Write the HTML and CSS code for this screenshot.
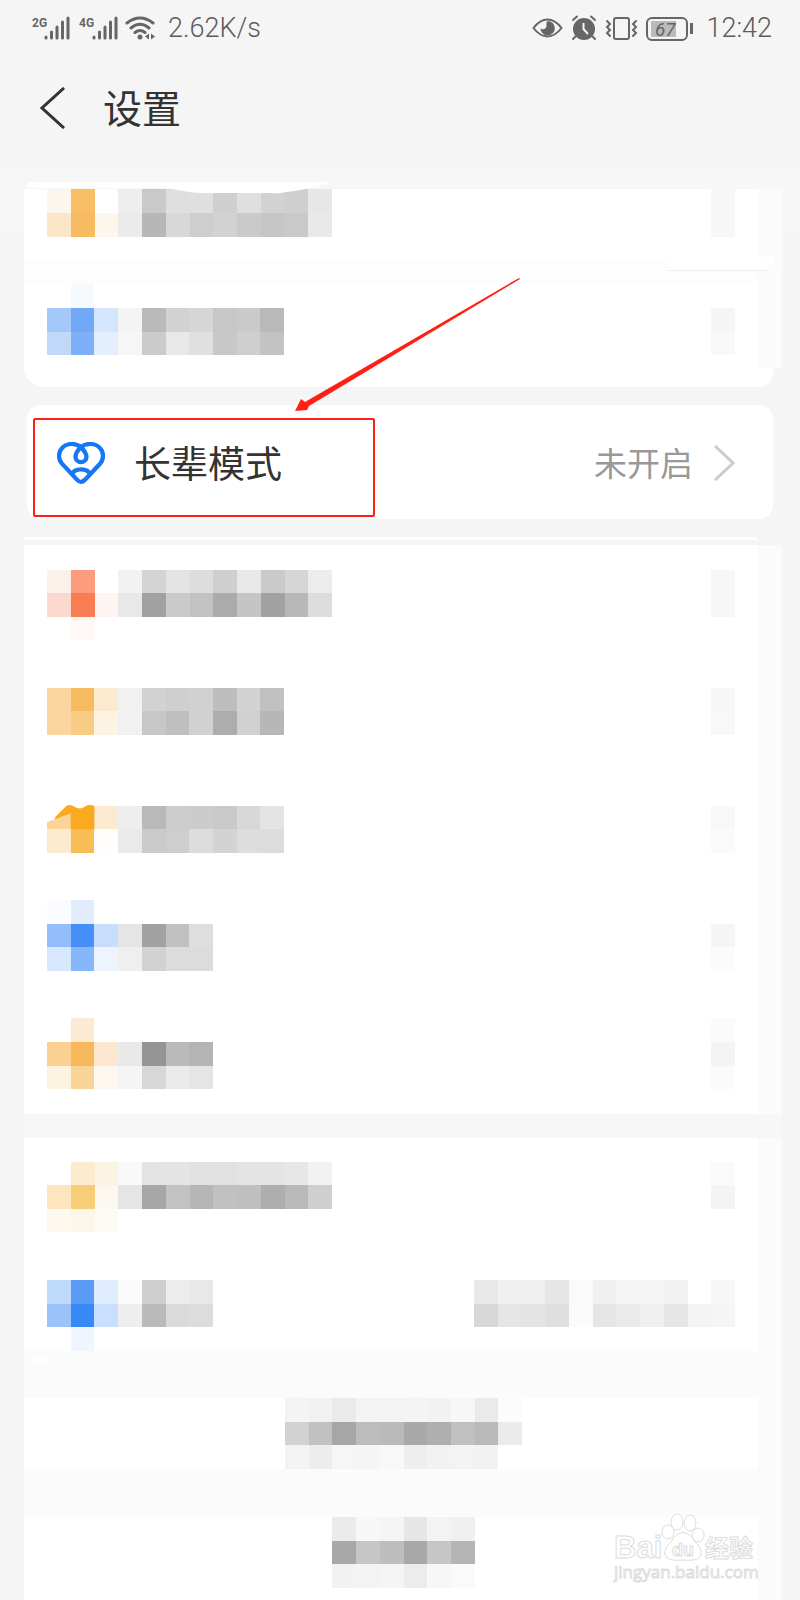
FILE: index.html
```html
<!DOCTYPE html>
<html lang="zh-CN">
<head>
<meta charset="utf-8">
<meta name="viewport" content="width=device-width, initial-scale=1">
<title>设置</title>
<link rel="stylesheet" href="styles.css">
</head>
<body>
<div class="status">
  <div class="status-group">
    <svg class="signals" viewBox="0 0 124 26" aria-hidden="true">
      <g class="net-label"><text x="0" y="12">2G</text><text x="47" y="12">4G</text></g>
      <g class="bars">
        <path d="M14 22v1M19.500 17v6M25 12v11M30.500 7v16M36 3v20"/>
        <path d="M62 22v1M67.500 17v6M73 12v11M78.500 7v16M84 3v20"/>
      </g>
      <g class="wifi">
        <path d="M95 8Q108 -2 121 8M99 13Q108 5.500 117 13M103 17.500Q108 13.500 113 17.500"/>
      </g>
      <circle cx="108" cy="22" r="2.500"/>
      <path d="M113 21.500l4-3v6zM123 21.500l-4-3v6z"/>
    </svg>
    <span>2.62K/s</span>
  </div>
  <div class="status-group">
    <svg class="indicators" viewBox="0 0 162 26" aria-hidden="true">
      <path class="line" d="M1.500 13Q8 4.500 15.500 4.500T29.500 13Q23 21.500 15.500 21.500T1.500 13z"/>
      <path d="M15.500 6a7.200 7.200 0 1 1-7 7c2 2.500 6 1 6-2c0-1.500-.5-3.500 1-5z"/>
      <circle cx="52" cy="14" r="11"/>
      <path class="line" d="M41 5l4-3.500M63 5l-4-3.500M44 21l-3 3M60 21l3 3"/>
      <path class="hand" d="M51.500 8v6l4.500 5"/>
      <rect class="line" x="82" y="3" width="15" height="21" rx="2"/>
      <path class="wave" d="M75 6l3 3l-3 3l3 3l-3 3l3 3M104 6l-3 3l3 3l-3 3l3 3l-3 3"/>
      <rect class="line" x="115" y="3" width="40" height="22" rx="5"/>
      <rect class="charge" x="119" y="6" width="25" height="16" rx="1"/>
      <text class="percent" x="123" y="21">67</text>
      <path d="M158 8h3v11h-3z"/>
    </svg>
    <span>12:42</span>
  </div>
</div>

<header class="topbar">
  <button class="back" type="button" aria-label="返回">
    <svg viewBox="0 0 26 42" aria-hidden="true"><path d="M24 1L2 21L24 41"/></svg>
  </button>
  <h1>设置</h1>
</header>

<main class="page">
  <ul class="card card-first">
    <li class="row divided">
      <svg class="tiles" data-rows="fdf6ef f9bf64 . eeeeee c9c9c9 dedede dfdfdf cfcfcf dfdfdf d2d2d2 cfcfcf e7e7e7/fce6c8 f7bb61 fdf7eb ebebeb b7b7b7 d8d8d8 cecece d2d2d2 cacaca c6c6c6 c9c9c9 e9e9e9/./."></svg>
      <svg class="tiles" data-rows="f7f7f7/f7f7f7/./."></svg>
    </li>
    <li class="row">
      <svg class="tiles" data-rows=". f5fafe . . . . . . . ./a4c8f9 72a9f7 d3e6fc f4f4f4 bababa d2d2d2 d6d6d6 c7c7c7 cacaca b9b9b9/c1d9f9 7eb0f9 e4effd f6f6f6 cbcbcb e8e8e8 e0e0e0 c8c8c8 cfcfcf c3c3c3/."></svg>
      <svg class="tiles" data-rows="./f5f5f5/f9f9f9/."></svg>
    </li>
    <li class="smear" aria-hidden="true">
      <svg viewBox="0 0 758 100">
        <path class="white" d="M2 4Q2 0 8 0H306C296 4 280 8 262 10Q254 12 246 11H180C162 11 160 8 140 6H4z"/>
        <path class="white" d="M644 77Q720 77 749 74V82L740 88H644z"/>
        <path class="hair" d="M644 88.500H742"/>
      </svg>
    </li>
  </ul>

  <section class="elder">
    <button class="elder-row" type="button">
      <svg class="heart" viewBox="0 0 145 129" aria-hidden="true">
        <path d="M72 15C57 2 30 2 16 17C3 30 3 52 15 65L61 114Q72 126 84 114L130 65C142 52 142 30 129 17C115 2 88 2 72 15z"/>
        <path d="M72 15C62 25 56 33 56 44A16.500 16.500 0 0 0 89 44C89 33 82 25 72 15z"/>
        <path d="M45 97C53 77 92 77 100 97"/>
      </svg>
      <span class="elder-name">长辈模式</span>
      <span class="elder-state">未开启</span>
      <svg class="chevron" viewBox="0 0 22 36" aria-hidden="true"><path d="M2 1L20 18L2 35"/></svg>
    </button>
    <div class="highlight"></div>
    <svg class="arrow" viewBox="0 0 226 136" aria-hidden="true"><path d="M0 134L6 122L10 125L224 1L225 2L14 129L12 133z"/></svg>
  </section>

  <ul class="card card-long">
    <li class="row">
      <svg class="tiles" data-rows="./fcf0ea fa9c7d . f2f2f2 d4d4d4 e4e4e4 dddddd cfcfcf e8e8e8 cacaca d5d5d5 ececec/fbd9cf f97d53 fef4f1 e8e8e8 a1a1a1 cacaca c2c2c2 ababab c5c5c5 a2a2a2 b8b8b8 dddddd/. fff8f6/."></svg>
      <svg class="tiles" data-rows="./f7f7f7/f7f7f7/./."></svg>
    </li>
    <li class="row">
      <svg class="tiles" data-rows="./fad59f f8ba5e fcead0 f1f1f1 d2d2d2 cfcfcf d1d1d1 bebebe d3d3d3 c1c1c1/fad59f f8cc85 fdf3e3 f1f1f1 c7c7c7 bfbfbf d1d1d1 adadad d1d1d1 b7b7b7/./."></svg>
      <svg class="tiles" data-rows="./f7f7f7/f8f8f8/./."></svg>
    </li>
    <li class="row">
      <svg class="tiles" data-rows="./fbd596 . fcead0 eeeeee b9b9b9 cdcdcd cccccc c9c9c9 d8d8d8 e4e4e4/fcebcf f9bd56 fffefb eaeaea cbcbcb cecece dcdcdc d3d3d3 dddddd dcdcdc/./."><path fill="#fff" d="M0 1H1V1.340L0 1.700z"/><path class="blob" d="M.32 1.590L.36 1.470L.8 1.030Q.95 .93 1.100 1.020Q1.380 1.220 1.600 1.040Q1.800 .93 2 1.020V2H1V1.340z"/></svg>
      <svg class="tiles" data-rows="./f8f8f8/fafafa/./."></svg>
    </li>
    <li class="row">
      <svg class="tiles" data-rows="fafcff e1edfc . . . . ./93bdfb 468ff8 c7ddfa e5e5e5 a2a2a2 c1c1c1 dedede/d7e7fd 86b6fa edf4fd efefef d2d2d2 dcdcdc dcdcdc/./."></svg>
      <svg class="tiles" data-rows="./f5f5f5/fbfbfb/./."></svg>
    </li>
    <li class="row">
      <svg class="tiles" data-rows=". fcead4 . . . . ./fad193 f7b75b fbe7ce e9e9e9 959595 bababa b4b4b4/fcf3e1 fad399 fdf8ef f5f5f5 d7d7d7 ebebeb e5e5e5/."></svg>
      <svg class="tiles" data-rows="fbfbfb/f4f4f4/fbfbfb/."></svg>
    </li>
  </ul>

  <ul class="card card-short">
    <li class="row">
      <svg class="tiles" data-rows="./. fcebce fdf3e3 f9f9f9 e3e3e3 e4e4e4 e1e1e1 e1e1e1 e4e4e4 e4e4e4 e7e7e7 f2f2f2/fde6bd f8cd78 fcf8ef e5e5e5 a7a7a7 c2c2c2 b6b6b6 c1c1c1 bfbfbf aeaeae b9b9b9 cfcfcf/fdf9ee fbf7e9 fcfbf5/."></svg>
      <svg class="tiles" data-rows="./fafafa/f4f4f4/./."></svg>
    </li>
    <li class="row">
      <svg class="tiles" data-rows="./c0dafb 5a9bf8 dfecfd fafafa cecece ececec e8e8e8/9bc3f9 3789f7 c9dffb eeeeee bababa dadada dcdcdc/. eff6ff"></svg>
      <svg class="tiles" data-rows="./e8e8e8 f0f0f0 efefef e6e6e6 fafafa f0f0f0 f5f5f5 f5f5f5 f1f1f1 . f7f7f7/d7d7d7 e6e6e6 e4e4e4 dfdfdf fbfbfb e5e5e5 eaeaea f0f0f0 e6e6e6 f4f4f4 f5f5f5/."></svg>
    </li>
  </ul>

  <div class="actions">
    <svg class="speck" viewBox="0 0 20 8" aria-hidden="true"><path class="white" d="M0 1Q10 -1 20 1Q15 8 10 7Q4 7 0 1z"/></svg>
    <div class="action">
      <svg class="tiles" data-rows="f4f4f4 f1f1f1 eaeaea f3f3f3 f3f3f3 f4f4f4 f2f2f2 f7f7f7 eaeaea fcfcfc/d2d2d2 c1c1c1 a6a6a6 bdbdbd bababa a9a9a9 afafaf c0c0c0 b9b9b9 ebebeb/f3f3f3 ededed f6f6f6 f5f5f5 f8f8f8 eeeeee f2f2f2 f3f3f3 f2f2f2 ."></svg>
    </div>
    <div class="action">
      <svg class="tiles" data-rows="ebebeb f7f7f7 f5f5f5 e6e6e6 f3f3f3 f0f0f0/a8a8a8 c6c6c6 bebebe a8a8a8 c6c6c6 b5b5b5/f2f2f2 f3f3f3 f5f5f5 ececec f7f7f7 fafafa"></svg>
    </div>
    <svg class="watermark" viewBox="0 0 148 70" aria-hidden="true">
      <text class="brand" x="1" y="44">Bai</text>
      <text class="brand-cn" x="92" y="43">经验</text>
      <ellipse cx="55" cy="18" rx="6" ry="7"/>
      <ellipse cx="64" cy="8" rx="6" ry="8"/>
      <ellipse cx="77" cy="9" rx="6" ry="8"/>
      <ellipse cx="85" cy="21" rx="6" ry="7"/>
      <path d="M61 23Q70 14 79 23Q81 28 85 31Q91 38 86 44Q82 47 70 46Q58 47 54 44Q49 38 55 31Q59 28 61 23z"/>
      <text class="du" x="59" y="42">du</text>
      <text class="site" x="1" y="64">jingyan.baidu.com</text>
    </svg>
  </div>
</main>
<script src="tiles.js"></script>
</body>
</html>
```

FILE: styles.css
```css
* {
  box-sizing: border-box;
}

body {
  margin: 0;
  min-height: 100vh;
  overflow-x: hidden;
  background: #f5f5f5;
  color: #333;
  font-family: Roboto, "Noto Sans CJK SC", sans-serif;
}

button {
  padding: 0;
  border: 0;
  background: none;
  color: inherit;
  font: inherit;
}

svg {
  display: block;
  flex: none;
}

/* Status bar */
.status {
  display: flex;
  justify-content: space-between;
  align-items: center;
  height: 56px;
  padding: 0 28px 0 32px;
  color: #5c5c5c;
  font-size: 27px;
  font-weight: 300;
  line-height: 32px;
}

.status-group {
  display: flex;
  align-items: center;
  gap: 12px;
}

.status svg {
  height: 26px;
  fill: #666;
}

.signals {
  width: 124px;
}

.indicators {
  width: 162px;
}

.net-label {
  font: bold 12px "Liberation Sans Narrow", Roboto, sans-serif;
}

.bars,
.wifi,
.line,
.wave {
  fill: none;
  stroke: #666;
  stroke-width: 2;
  stroke-linecap: round;
}

.bars,
.wifi {
  stroke-width: 3;
}

.hand {
  fill: none;
  stroke: #f5f5f5;
  stroke-width: 2;
}

.status .charge {
  fill: #bbb;
}

.percent {
  font: italic 19px Roboto, sans-serif;
}

/* Title bar */
.topbar {
  display: flex;
  align-items: center;
  gap: 37px;
  height: 104px;
  padding: 0 40px;
}

.topbar h1 {
  margin: 0;
  padding-top: 4px;
  font-size: 39px;
  font-weight: 400;
  line-height: 48px;
}

.back svg {
  width: 26px;
  height: 42px;
  fill: none;
  stroke: #333;
  stroke-width: 3;
}

/* Cards */
.page {
  padding: 29px 18px 0 24px;
  background: linear-gradient(#f5f5f5, #f7f7f7 24px, #f5f5f5 120px);
}

.card {
  position: relative;
  margin: 0;
  padding: 0;
  list-style: none;
  background: linear-gradient(to left, #fbfbfb 24px, #fff 24px);
}

.row {
  display: flex;
  justify-content: space-between;
  padding: 0 47px 0 23px;
}

.card-first {
  margin-right: 9px;
  padding-bottom: 8px;
  border-radius: 0 0 14px 20px;
  background: #fff;
}

.card-first .row {
  padding-right: 38px;
}

.card-first::after {
  content: "";
  position: absolute;
  top: 0;
  right: -9px;
  bottom: 19px;
  width: 24px;
  background: #fbfbfb;
}

.divided {
  background: linear-gradient(to top, #fdfdfd 24px, #fff 24px);
}

.smear {
  position: absolute;
  z-index: 1;
  top: -7px;
  left: 0;
}

.smear svg {
  width: 758px;
  height: 100px;
}

.white {
  fill: #fff;
}

.hair {
  stroke: #eee;
}

.blob {
  fill: #faaa21;
  shape-rendering: geometricPrecision;
}

.card-long {
  padding: 1px 0;
}

.card-long::before {
  content: "";
  position: absolute;
  top: -8px;
  left: 0;
  right: 24px;
  height: 3px;
  border-radius: 2px;
  background: #fefefe;
}

.card-short {
  margin-top: 24px;
  box-shadow: 0 -24px #f7f7f7;
}

/* Elder mode */
.elder {
  position: relative;
  margin: 18px 9px 26px 3px;
  border-radius: 14px;
  background: #fff;
}

.elder-row {
  display: flex;
  align-items: center;
  width: 100%;
  height: 114px;
  padding: 2px 38px 0 30px;
  text-align: left;
}

.heart {
  width: 48px;
  height: 43px;
  fill: none;
  stroke: #1677f5;
  stroke-width: 13;
}

.elder-name {
  flex: 1;
  padding: 6px 0 0 29px;
  font-size: 37px;
  line-height: 48px;
}

.elder-state {
  padding-top: 4px;
  color: #999;
  font-size: 33px;
  line-height: 48px;
}

.chevron {
  width: 22px;
  height: 36px;
  margin-left: 20px;
  fill: none;
  stroke: #ccc;
  stroke-width: 3;
}

.highlight {
  position: absolute;
  top: 13px;
  left: 6px;
  width: 342px;
  height: 99px;
  border: 2px solid #ff2015;
  border-radius: 2px;
}

.arrow {
  position: absolute;
  z-index: 2;
  top: -128px;
  left: 268px;
  width: 226px;
  height: 136px;
  fill: #ff2015;
}

/* Bottom actions */
.actions {
  position: relative;
  padding: 47px 0 12px;
  background: #fbfbfb;
}

.action {
  display: flex;
  justify-content: center;
  background: linear-gradient(to left, #fbfbfb 24px, #fff 24px);
}

.action + .action {
  margin-top: 48px;
  margin-bottom: -12px;
  padding-bottom: 12px;
}

.speck {
  position: absolute;
  top: 6px;
  left: 6px;
  width: 20px;
  height: 8px;
}

.watermark {
  position: absolute;
  right: 21px;
  bottom: 16px;
  width: 148px;
  height: 70px;
  fill: #fff;
  stroke: #ddd;
}

.brand {
  font: bold 31px "Liberation Sans", sans-serif;
}

.brand-cn {
  font: bold 24px "Noto Sans CJK SC", sans-serif;
}

.du {
  font: bold 18px "Liberation Sans", sans-serif;
}

.site {
  font: 17px "Open Sans", sans-serif;
}
```

FILE: tiles.js
```js
// Draws each masked label as a grid of square tiles.
// Rows are separated by "/", tiles by a space; "." leaves a tile empty.
const TILE = 23.7;
const NS = "http://www.w3.org/2000/svg";

document.querySelectorAll(".tiles").forEach((svg) => {
  const rows = svg.dataset.rows.split("/").map((r) => r.split(" "));
  const cols = Math.max(...rows.map((r) => r.length));
  svg.setAttribute("viewBox", `0 0 ${cols} ${rows.length}`);
  svg.setAttribute("preserveAspectRatio", "none");
  svg.setAttribute("shape-rendering", "crispEdges");
  svg.setAttribute("aria-hidden", "true");
  svg.style.width = Math.ceil(cols * TILE) + "px";
  svg.style.height = Math.floor(rows.length * TILE + 0.4) + "px";
  const group = document.createElementNS(NS, "g");
  rows.forEach((row, y) => row.forEach((color, x) => {
    if (color === ".") return;
    const rect = document.createElementNS(NS, "rect");
    rect.setAttribute("x", x);
    rect.setAttribute("y", y);
    rect.setAttribute("width", 1);
    rect.setAttribute("height", 1);
    rect.setAttribute("fill", "#" + color);
    group.append(rect);
  }));
  svg.prepend(group);
});
```
